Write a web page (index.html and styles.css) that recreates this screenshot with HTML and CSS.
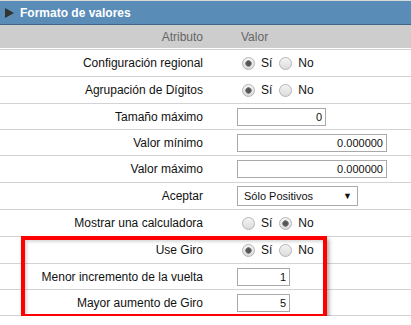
FILE: index.html
```html
<!DOCTYPE html>
<html>
<head>
	<meta charset="utf-8">
	<title>Formato de valores</title>
	<link rel="stylesheet" href="styles.css">
</head>
<body>
	<div class="panel">
		<div class="panel-title">
			<svg class="arrow" width="9" height="10" viewBox="0 0 9 10"><polygon points="0,0 9,5 0,10" fill="#333"/></svg>
			Formato de valores
		</div>
		<div class="head-row">
			<div class="attr">Atributo</div>
			<div class="val">Valor</div>
		</div>

		<div class="row">
			<div class="attr">Configuración regional</div>
			<div class="val">
				<label class="opt"><input type="radio" name="r1" checked>Sí</label>
				<label class="opt"><input type="radio" name="r1">No</label>
			</div>
		</div>
		<div class="row">
			<div class="attr">Agrupación de Dígitos</div>
			<div class="val">
				<label class="opt"><input type="radio" name="r2" checked>Sí</label>
				<label class="opt"><input type="radio" name="r2">No</label>
			</div>
		</div>
		<div class="row short">
			<div class="attr">Tamaño máximo</div>
			<div class="val"><input class="num mid" type="text" value="0"></div>
		</div>
		<div class="row short">
			<div class="attr">Valor mínimo</div>
			<div class="val"><input class="num wide" type="text" value="0.000000"></div>
		</div>
		<div class="row">
			<div class="attr">Valor máximo</div>
			<div class="val"><input class="num wide" type="text" value="0.000000"></div>
		</div>
		<div class="row">
			<div class="attr">Aceptar</div>
			<div class="val">
				<div class="select"><span>Sólo Positivos</span><span class="caret">&#9660;</span></div>
			</div>
		</div>
		<div class="row">
			<div class="attr">Mostrar una calculadora</div>
			<div class="val">
				<label class="opt"><input type="radio" name="r3">Sí</label>
				<label class="opt"><input type="radio" name="r3" checked>No</label>
			</div>
		</div>
		<div class="row">
			<div class="attr">Use Giro</div>
			<div class="val">
				<label class="opt"><input type="radio" name="r4" checked>Sí</label>
				<label class="opt"><input type="radio" name="r4">No</label>
			</div>
		</div>
		<div class="row short">
			<div class="attr">Menor incremento de la vuelta</div>
			<div class="val"><input class="num small" type="text" value="1"></div>
		</div>
		<div class="row short last">
			<div class="attr">Mayor aumento de Giro</div>
			<div class="val"><input class="num small" type="text" value="5"></div>
		</div>

		<!-- marca roja sobre las filas de giro -->
		<div class="highlight"></div>
	</div>
</body>
</html>
```

FILE: styles.css
```css
body {
	margin: 0;
	background-color: #fff;
	font-family: "Liberation Sans", Arial, sans-serif;
	font-size: 12px;
	color: #111;
}
.panel {
	position: relative;
	width: 411px;
}
.panel-title {
	display: flex;
	align-items: center;
	height: 23px;
	border-top: 1px solid #d9d9d9;
	border-bottom: 1px solid #3f6485;
	background-color: #5a8cb8;
	color: #fff;
	font-weight: bold;
	padding-left: 5px;
}
.panel-title .arrow {
	margin-right: 6px;
}
.head-row {
	display: grid;
	grid-template-columns: 220px 1fr;
	align-items: center;
	height: 23px;
	background-color: #cdcdcd;
	color: #666;
	margin-bottom: 1px;
}
.head-row .val {
	padding-left: 21px;
}
.row {
	display: grid;
	grid-template-columns: 220px 1fr;
	align-items: center;
	height: 26px;
	border-top: 1px solid #d3d3d3;
}
.row.short {
	height: 25px;
}
.row.last {
	border-bottom: 1px solid #d3d3d3;
}
.attr {
	text-align: right;
	padding-right: 17px;
}
.val {
	padding-left: 17px;
	display: flex;
	align-items: center;
}
.opt {
	display: flex;
	align-items: center;
	margin-right: 7px;
}
.opt input {
	-webkit-appearance: none;
	appearance: none;
	width: 13px;
	height: 13px;
	margin: 0 6px 0 5px;
	border: 1px solid #b4b4b4;
	border-radius: 50%;
	background: linear-gradient(#f4f4f4, #dcdcdc);
	box-sizing: border-box;
}
.opt + .opt input {
	margin-left: 0;
}
.opt input:checked {
	background: radial-gradient(circle, #555 0, #555 2px, #8a8a8a 3px, transparent 3.5px), linear-gradient(#f4f4f4, #dcdcdc);
}
.num {
	box-sizing: border-box;
	height: 18px;
	margin: 0;
	border: 1px solid #a9a9a9;
	padding: 0 3px;
	text-align: right;
	font-family: "Liberation Sans", Arial, sans-serif;
	font-size: 11px;
	color: #111;
}
.num.mid {
	width: 89px;
}
.num.wide {
	width: 150px;
}
.num.small {
	width: 53px;
}
.select {
	box-sizing: border-box;
	display: flex;
	align-items: center;
	justify-content: space-between;
	width: 121px;
	height: 20px;
	border: 1px solid #a9a9a9;
	padding: 0 5px 0 6px;
	font-size: 11px;
	color: #111;
}
.select .caret {
	font-size: 9px;
}
.highlight {
	position: absolute;
	left: 21px;
	top: 236px;
	width: 306px;
	height: 82px;
	box-sizing: border-box;
	border: 4px solid #f00;
	box-shadow: 2px 3px 4px rgba(0,0,0,0.35), inset 2px 2px 3px rgba(0,0,0,0.15);
}
```
